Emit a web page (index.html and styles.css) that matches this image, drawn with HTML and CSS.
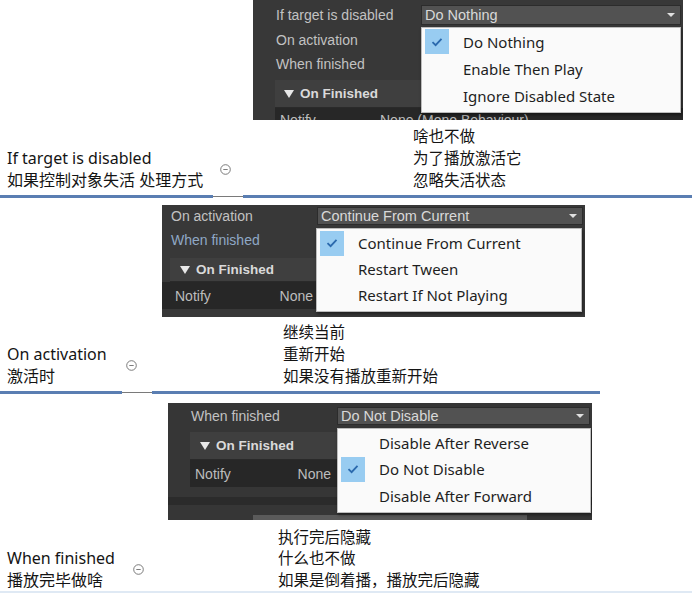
FILE: index.html
```html
<!DOCTYPE html>
<html>
<head>
<meta charset="utf-8">
<link rel="stylesheet" href="styles.css">
</head>
<body>
<div class="page">

  <section class="sec s1">
    <div class="panel p1">
      <div class="prow top"><span class="plabel">If target is disabled</span><div class="field"><span>Do Nothing</span><i class="arrow"></i></div></div>
      <div class="prow r2"><span class="plabel">On activation</span></div>
      <div class="prow"><span class="plabel">When finished</span></div>
      <div class="evhead"><i class="tri"></i>On Finished</div>
      <div class="notify"><span class="nl">Notify</span><span>None (Mono Behaviour)</span></div>
      <div class="menu">
        <div class="mi on"><span class="chk"><svg width="12" height="10" viewBox="0 0 12 10"><path d="M1.5 5.2 L4.6 8.2 L10.5 1.8" fill="none" stroke="#2a69ad" stroke-width="1.8"/></svg></span>Do Nothing</div>
        <div class="mi"><span class="chk"></span>Enable Then Play</div>
        <div class="mi"><span class="chk"></span>Ignore Disabled State</div>
      </div>
    </div>
    <div class="annot">
      <div class="lead">
        <div class="labels"><div>If target is disabled</div><div>如果控制对象失活 处理方式</div></div>
        <svg class="cicon" width="11" height="11" viewBox="0 0 11 11"><circle cx="5.5" cy="5.5" r="4.8" fill="none" stroke="#6d6d6d" stroke-width="0.9"/><path d="M3.3 5.5 H7.7" stroke="#6d6d6d" stroke-width="0.9"/></svg>
      </div>
      <div class="notes"><div>啥也不做</div><div>为了播放激活它</div><div>忽略失活状态</div></div>
    </div>
    <div class="divider"><span class="blue"></span><span class="gap"></span><span class="blue"></span><span></span></div>
  </section>

  <section class="sec s2">
    <div class="panel p2">
      <div class="prow top"><span class="plabel">On activation</span><div class="field"><span>Continue From Current</span><i class="arrow"></i></div></div>
      <div class="prow r2"><span class="plabel focus">When finished</span></div>
      <div class="evhead"><i class="tri"></i>On Finished</div>
      <div class="notify"><span>Notify</span><span>None</span></div>
      <div class="menu">
        <div class="mi on"><span class="chk"><svg width="12" height="10" viewBox="0 0 12 10"><path d="M1.5 5.2 L4.6 8.2 L10.5 1.8" fill="none" stroke="#2a69ad" stroke-width="1.8"/></svg></span>Continue From Current</div>
        <div class="mi"><span class="chk"></span>Restart Tween</div>
        <div class="mi"><span class="chk"></span>Restart If Not Playing</div>
      </div>
    </div>
    <div class="annot">
      <div class="lead">
        <div class="labels"><div>On activation</div><div>激活时</div></div>
        <svg class="cicon" width="11" height="11" viewBox="0 0 11 11"><circle cx="5.5" cy="5.5" r="4.8" fill="none" stroke="#6d6d6d" stroke-width="0.9"/><path d="M3.3 5.5 H7.7" stroke="#6d6d6d" stroke-width="0.9"/></svg>
      </div>
      <div class="notes"><div>继续当前</div><div>重新开始</div><div>如果没有播放重新开始</div></div>
    </div>
    <div class="divider"><span class="blue"></span><span class="gap"></span><span class="blue"></span><span></span></div>
  </section>

  <section class="sec s3">
    <div class="panel p3">
      <div class="prow top"><span class="plabel">When finished</span><div class="field"><span>Do Not Disable</span><i class="arrow"></i></div></div>
      <div class="evhead"><i class="tri"></i>On Finished</div>
      <div class="notify"><span>Notify</span><span>None</span></div>
      <div class="pfoot"><div class="band"></div><div class="bar"></div></div>
      <div class="menu">
        <div class="mi"><span class="chk"></span>Disable After Reverse</div>
        <div class="mi on"><span class="chk"><svg width="12" height="10" viewBox="0 0 12 10"><path d="M1.5 5.2 L4.6 8.2 L10.5 1.8" fill="none" stroke="#2a69ad" stroke-width="1.8"/></svg></span>Do Not Disable</div>
        <div class="mi"><span class="chk"></span>Disable After Forward</div>
      </div>
    </div>
    <div class="annot">
      <div class="lead">
        <div class="labels"><div>When finished</div><div>播放完毕做啥</div></div>
        <svg class="cicon" width="11" height="11" viewBox="0 0 11 11"><circle cx="5.5" cy="5.5" r="4.8" fill="none" stroke="#6d6d6d" stroke-width="0.9"/><path d="M3.3 5.5 H7.7" stroke="#6d6d6d" stroke-width="0.9"/></svg>
      </div>
      <div class="notes"><div>执行完后隐藏</div><div>什么也不做</div><div>如果是倒着播，播放完后隐藏</div></div>
    </div>
    <div class="divider faint"></div>
  </section>

</div>
</body>
</html>
```

FILE: styles.css
```css
html, body {
  margin: 0;
  padding: 0;
  background: #ffffff;
}
body {
  width: 692px;
  height: 593px;
  overflow: hidden;
  font-family: "Noto Sans", "Noto Sans CJK SC", sans-serif;
}
.page {
  display: flex;
  flex-direction: column;
}

/* ---------- dark Unity panels ---------- */
.panel {
  position: relative;
  overflow: hidden;
  display: flex;
  flex-direction: column;
  box-sizing: border-box;
  background: #383838;
  font-family: "Liberation Sans", Arial, sans-serif;
  font-size: 14px;
  color: #c2c2c2;
}
.prow {
  display: flex;
  align-items: center;
  height: 24px;
  flex-shrink: 0;
}
.prow.top { height: 20px; }
.prow.r2 { margin-top: 3px; }
.plabel { width: 145px; flex-shrink: 0; white-space: nowrap; }
.plabel.focus { color: #8fa8c6; }
.field {
  flex: 1;
  height: 100%;
  box-sizing: border-box;
  background: #525252;
  border: 1px solid #2c2c2c;
  display: flex;
  align-items: center;
  justify-content: space-between;
  padding: 0 5px 0 3px;
  margin-right: 2px;
  color: #d9d9d9;
  font-size: 14.5px;
}
.arrow {
  width: 0;
  height: 0;
  border-left: 4px solid transparent;
  border-right: 4px solid transparent;
  border-top: 4px solid #e0e0e0;
}
.evhead {
  display: flex;
  align-items: center;
  gap: 6px;
  flex-shrink: 0;
  box-sizing: border-box;
  background: #3f3f3f;
  border-bottom: 1px solid #2a2a2a;
  color: #dadada;
  font-weight: bold;
  font-size: 13.5px;
}
.tri {
  width: 0;
  height: 0;
  border-left: 5px solid transparent;
  border-right: 5px solid transparent;
  border-top: 8px solid #e8e8e8;
}
.notify {
  display: flex;
  align-items: center;
  flex-shrink: 0;
  box-sizing: border-box;
  background: #272727;
  color: #bdbdbd;
}

/* dropdown popup */
.menu {
  position: absolute;
  box-sizing: border-box;
  background: #fafafa;
  border: 1px solid #bcbcbc;
  box-shadow: 1px 2px 3px rgba(0, 0, 0, 0.45);
  padding-top: 1px;
  font-family: "Noto Sans", sans-serif;
  font-size: 15px;
  color: #1e1e1e;
}
.mi {
  display: flex;
  align-items: center;
  height: 26px;
  white-space: nowrap;
}
.chk {
  width: 24px;
  height: 25px;
  margin-left: 3px;
  margin-right: 14px;
  display: flex;
  align-items: center;
  justify-content: center;
  flex-shrink: 0;
}
.mi.on .chk { background: #98ccf1; }

/* panel 1 */
.p1 {
  margin-left: 253px;
  width: 430px;
  height: 120px;
  padding-left: 23px;
}
.p1 .prow.top { margin-top: 5px; }
.p1 .evhead {
  margin-top: 4px;
  margin-left: -1px;
  width: 146px;
  height: 28px;
  padding-left: 9px;
}
.p1 .notify {
  margin-left: -1px;
  height: 24px;
  padding-left: 5px;
}
.p1 .nl { width: 100px; }
.p1 .menu { left: 168px; top: 27px; width: 260px; height: 86px; padding-top: 0; }
.p1 .mi { height: 27px; }

/* panel 2 */
.p2 {
  margin-top: 7px;
  margin-left: 162px;
  width: 423px;
  height: 112px;
  padding-left: 9px;
}
.p2 .prow.top { margin-top: 2px; height: 18px; }
.p2 .plabel { width: 146px; }
.p2 .evhead {
  margin-top: 6px;
  margin-left: -1px;
  width: 146px;
  height: 24px;
  padding-left: 10px;
}
.p2 .notify {
  margin-left: -9px;
  width: 154px;
  height: 27px;
  padding: 0 3px 0 13px;
  justify-content: space-between;
}
.p2 .menu { left: 154px; top: 23px; width: 266px; height: 84px; }

/* panel 3 */
.p3 {
  margin-top: 9px;
  margin-left: 168px;
  width: 424px;
  height: 117px;
  padding-left: 23px;
  background: #363636;
}
.p3 .prow.top { margin-top: 4px; height: 18px; }
.p3 .plabel { width: 146px; }
.p3 .evhead {
  margin-top: 7px;
  margin-left: -1px;
  width: 147px;
  height: 28px;
  padding-left: 10px;
}
.p3 .notify {
  margin-left: -1px;
  width: 147px;
  height: 27px;
  padding: 0 6px 0 5px;
  justify-content: space-between;
}
.pfoot {
  margin-left: -23px;
  margin-top: 10px;
  display: flex;
  flex-direction: column;
  flex: 1;
}
.pfoot .band { height: 8px; background: #2b2b2b; }
.pfoot .bar {
  margin-top: auto;
  margin-left: 85px;
  width: 274px;
  height: 5px;
  background: #5a5a5a;
}
.p3 .menu { left: 169px; top: 25px; width: 254px; height: 85px; }
.p3 .mi:nth-child(3) { height: 27px; }

/* ---------- annotations ---------- */
.annot {
  display: flex;
  align-items: flex-end;
  box-sizing: border-box;
  font-size: 15.5px;
  line-height: 22px;
  color: #141414;
  white-space: nowrap;
}
.labels { font-size: 16px; }
.lead {
  display: flex;
  align-items: center;
  padding-left: 7px;
}
.cicon { flex-shrink: 0; }

.s1 .annot { height: 75px; padding: 5px 0 4px; }
.s1 .labels { width: 213px; }
.s1 .notes { margin-left: 182px; }

.s2 .annot { height: 74px; padding: 4px 0 4px; }
.s2 .labels { width: 119px; }
.s2 .notes { margin-left: 146px; }

.s3 .annot { height: 71px; padding: 5px 0 0; line-height: 21.5px; }
.s3 .labels { width: 126px; }
.s3 .notes { margin-left: 134px; }

/* ---------- dividers ---------- */
.divider {
  display: grid;
  height: 3px;
}
.divider .blue { background: #5a7eb2; }
.divider .gap {
  background: linear-gradient(#fff 0 1px, #7a7a7a 1px 2px, #fff 2px);
}
.s1 .divider { grid-template-columns: 213px 30px 449px 0; }
.s2 .divider { grid-template-columns: 122px 30px 448px 92px; }
.divider.faint {
  height: 2px;
  background: #dfe9f4;
}
```
